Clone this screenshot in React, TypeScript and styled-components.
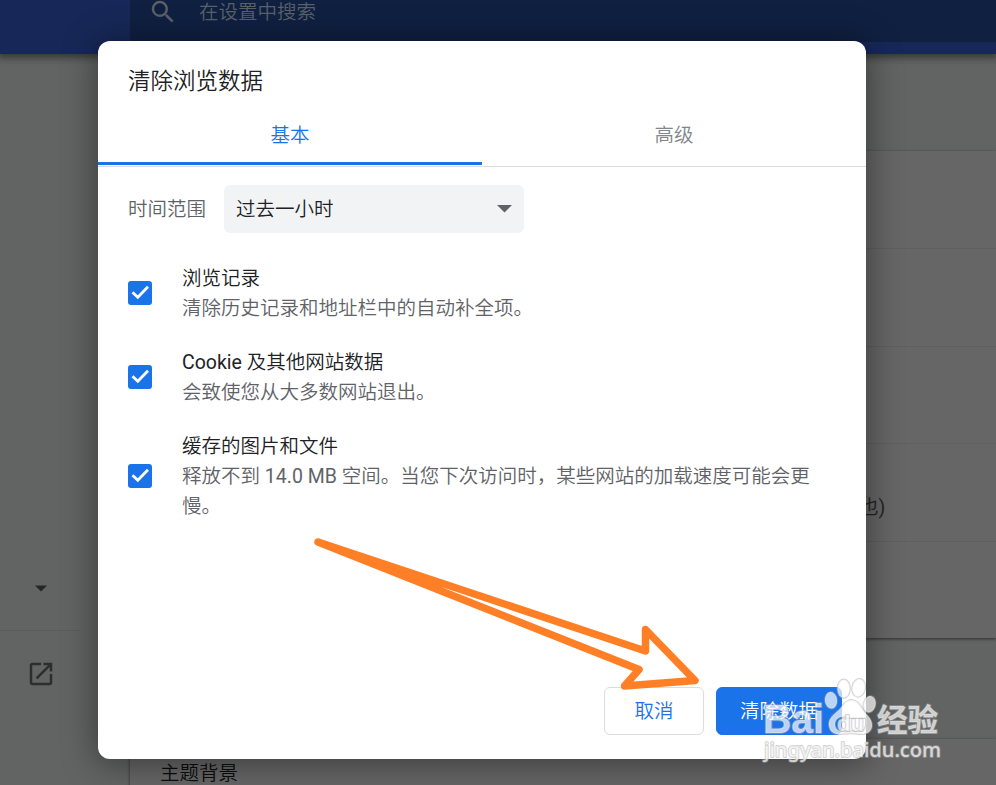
import React from 'react';
import styled, { createGlobalStyle } from 'styled-components';

const GlobalStyle = createGlobalStyle`
  * { box-sizing: border-box; }
  html, body { margin: 0; overflow: hidden; }
  body {
    font-family: Roboto, "Noto Sans CJK SC", sans-serif;
    font-size: 19.5px;
    line-height: 30px;
    color: #202124;
  }
`;

const Page = styled.div`
  position: relative;
  width: 996px;
  height: 785px;
  overflow: hidden;
  background: #626463;
`;

const Header = styled.header`
  position: relative;
  display: flex;
  height: 54px;
  padding-left: 130px;
  background: #172858;
  box-shadow: 0 2px 7px 2px rgba(20, 20, 20, 0.55);
`;

const SearchField = styled.div`
  display: flex;
  flex: 1;
  height: 42px;
  padding: 0 0 18px 18px;
  align-items: center;
  gap: 21px;
  background: #102041;
  color: #5a6069;
  font-weight: 350;
`;

const SearchHint = styled.span`
  padding-top: 2px;
`;

const Columns = styled.div`
  display: flex;
  height: 731px;
`;

const Sidebar = styled.aside`
  width: 130px;
  padding-top: 519px;
`;

const SidebarSection = styled.div<{ $last?: boolean }>`
  display: flex;
  width: 80px;
  height: ${(p) => (p.$last ? 86 : 58)}px;
  padding-left: 26px;
  align-items: ${(p) => (p.$last ? 'center' : 'flex-start')};
  border-bottom: ${(p) => (p.$last ? 'none' : '1px solid #5a5c5b')};
`;

const Content = styled.main`
  flex: 1;
  padding-top: 97px;
`;

const Card = styled.section`
  margin-bottom: 101px;
  background: #666;
  box-shadow: 0 1px 3px rgba(0, 0, 0, 0.55);
`;

const CardRow = styled.div`
  display: flex;
  height: 97.4px;
  padding-left: 30px;
  align-items: center;
  color: #242526;
  & + & { border-top: 1px solid #5f5f5f; }
`;

const NoteRow = styled(CardRow)`
  padding: 31px 0 0 729px;
  border-top: 1px solid #5f5f5f;
`;

const ThemeRow = styled(CardRow)`
  height: 70px;
  color: #0c0d0d;
  font-weight: 350;
`;

const Overlay = styled.div`
  position: absolute;
  inset: 0;
  display: flex;
  padding: 41px 0 0 98px;
  align-items: flex-start;
`;

const Dialog = styled.div`
  display: flex;
  flex-direction: column;
  width: 768px;
  height: 718px;
  background: #fff;
  border-radius: 12px;
  box-shadow: 0 3px 34px 2px rgba(0, 0, 0, 0.42);
  font-weight: 350;
`;

const Title = styled.h1`
  margin: 0;
  padding: 22px 30px 0;
  height: 62px;
  font-size: 22.5px;
  font-weight: 350;
  line-height: 36px;
`;

const Tabs = styled.div`
  display: flex;
  height: 64px;
  border-bottom: 1px solid #dadce0;
`;

const Tab = styled.div<{ $active?: boolean }>`
  flex: 1;
  height: 62px;
  padding-top: 18px;
  text-align: center;
  color: ${(p) => (p.$active ? '#1a73e8' : '#80868b')};
  border-bottom: 3px solid ${(p) => (p.$active ? '#1a73e8' : 'transparent')};
`;

const RangeRow = styled.div`
  display: flex;
  padding: 18px 30px 0;
  align-items: center;
  gap: 18px;
  color: #5f6368;
`;

const RangeText = styled.span`
  padding-top: 2px;
`;

const Select = styled.div`
  display: flex;
  width: 300px;
  height: 48px;
  padding: 0 12px;
  align-items: center;
  justify-content: space-between;
  border-radius: 6px;
  background: #f1f3f4;
  color: #202124;
`;

const Options = styled.div`
  display: flex;
  flex: 1;
  flex-direction: column;
  gap: 24px;
  padding: 30px 30px 0;
`;

const Option = styled.label`
  display: flex;
  align-items: center;
  gap: 30px;
`;

const Box = styled.span`
  display: flex;
  flex: none;
  width: 24px;
  height: 24px;
  border-radius: 3px;
  background: #1a73e8;
`;

const OptionText = styled.div`
  width: 640px;
  padding-top: 1px;
  margin-bottom: -1px;
`;

const Label = styled.div`
  color: #202124;
`;

const Description = styled.div`
  color: #5f6368;
`;

const Latin = styled.span`
  font-weight: 400;
`;

const Actions = styled.div`
  display: flex;
  justify-content: flex-end;
  gap: 12px;
  padding: 0 24px 24px;
`;

const Button = styled.button<{ $primary?: boolean }>`
  width: ${(p) => (p.$primary ? 126 : 100)}px;
  height: 48px;
  padding: 2px 0 0;
  border: 1px solid ${(p) => (p.$primary ? '#1a73e8' : '#dadce0')};
  border-radius: 6px;
  background: ${(p) => (p.$primary ? '#1a73e8' : '#fff')};
  color: ${(p) => (p.$primary ? '#fff' : '#1a73e8')};
  font: inherit;
`;

const Arrow = styled.svg`
  position: absolute;
  left: 300px;
  top: 520px;
`;

const Watermark = styled.svg`
  position: absolute;
  left: 755px;
  top: 670px;
`;

const Caret = ({ color, width }: { color: string; width: number }) => (
  <svg width={width} height={width / 2} viewBox="0 0 14 7">
    <path d="M0 0H14L7 7Z" fill={color} />
  </svg>
);

const CheckBox = () => (
  <Box>
    <svg width="24" height="24" viewBox="0 0 24 24" fill="none" stroke="#fff" strokeWidth="2.8">
      <path d="M4.5 11.3 9.8 16.3 20 5.7" />
    </svg>
  </Box>
);

const options = [
  { key: 'history', label: '浏览记录', description: '清除历史记录和地址栏中的自动补全项。' },
  {
    key: 'cookies',
    label: <><Latin>Cookie </Latin>及其他网站数据</>,
    description: '会致使您从大多数网站退出。',
  },
  {
    key: 'cache',
    label: '缓存的图片和文件',
    description: (
      <>释放不到<Latin> 14.0 MB </Latin>空间。当您下次访问时，某些网站的加载速度可能会更慢。</>
    ),
  },
];

export default function App() {
  return (
    <Page>
      <GlobalStyle />
      <Header>
        <SearchField>
          <svg width="30" height="30" viewBox="0 0 24 24" fill="#5a6069">
            <path d="M15.5 14h-.79l-.28-.27A6.47 6.47 0 0 0 16 9.5 6.5 6.5 0 1 0 9.5 16c1.61 0 3.09-.59 4.23-1.57l.27.28v.79l5 4.99L20.49 19l-4.99-5zm-6 0C7.01 14 5 11.99 5 9.5S7.01 5 9.5 5 14 7.01 14 9.5 11.99 14 9.5 14z" />
          </svg>
          <SearchHint>在设置中搜索</SearchHint>
        </SearchField>
      </Header>
      <Columns>
        <Sidebar>
          <SidebarSection>
            <svg width="30" height="30" viewBox="0 0 30 30">
              <path d="M9 12.500h12l-6 6z" fill="#242627" />
            </svg>
          </SidebarSection>
          <SidebarSection $last>
            <svg width="30" height="30" viewBox="0 0 24 24" fill="#2b2d2e">
              <path d="M19 19H5V5h7V3H5c-1.11 0-2 .9-2 2v14c0 1.1.89 2 2 2h14c1.1 0 2-.9 2-2v-7h-2v7zM14 3v2h3.59l-9.83 9.83 1.41 1.41L19 6.41V10h2V3h-7z" />
            </svg>
          </SidebarSection>
        </Sidebar>
        <Content>
          <Card>
            <CardRow />
            <CardRow />
            <CardRow />
            <NoteRow>也)</NoteRow>
            <CardRow />
          </Card>
          <Card>
            <ThemeRow>主题背景</ThemeRow>
          </Card>
        </Content>
      </Columns>
      <Overlay>
        <Dialog>
          <Title>清除浏览数据</Title>
          <Tabs>
            <Tab $active>基本</Tab>
            <Tab>高级</Tab>
          </Tabs>
          <RangeRow>
            <RangeText>时间范围</RangeText>
            <Select>
              <RangeText>过去一小时</RangeText>
              <Caret color="#5f6368" width={15} />
            </Select>
          </RangeRow>
          <Options>
            {options.map((o) => (
              <Option key={o.key}>
                <CheckBox />
                <OptionText>
                  <Label>{o.label}</Label>
                  <Description>{o.description}</Description>
                </OptionText>
              </Option>
            ))}
          </Options>
          <Actions>
            <Button>取消</Button>
            <Button $primary>清除数据</Button>
          </Actions>
        </Dialog>
      </Overlay>
      <Arrow width="420" height="180" viewBox="0 0 420 180" fill="none">
        <path
          d="M18 22 345.5 131V109.500L395 160.500 324.500 166 339 149.500Z"
          stroke="#ff7f27"
          strokeWidth="7.500"
          strokeLinejoin="round"
        />
      </Arrow>
      <Watermark width="200" height="110" viewBox="0 0 200 110">
        <g fill="#fff" fillOpacity="0.7" stroke="#a8a8a8" strokeOpacity="0.5" strokeWidth="1.800" strokeLinejoin="round" paintOrder="stroke">
          <text x="8" y="63" fontFamily="Liberation Sans" fontSize="40" fontWeight="700" textLength="61" lengthAdjust="spacingAndGlyphs">Bai</text>
          <ellipse cx="76" cy="30.300" rx="6" ry="8.300" transform="rotate(-6 76 30.300)" />
          <ellipse cx="88.700" cy="18.700" rx="6.300" ry="9.300" />
          <ellipse cx="103.700" cy="17.800" rx="6.500" ry="9" transform="rotate(10 103.700 17.800)" />
          <ellipse cx="114.500" cy="34.300" rx="6" ry="8.300" transform="rotate(14 114.500 34.300)" />
          <path
            fillRule="evenodd"
            d="M96 30C90 30 88 36 84 40C78 45 73 49 74 56C75 62 80 65 86 64C92 63 98 63 104 64C111 65 117 62 117 55C117 48 111 45 108 40C105 34 102 30 96 30ZM90 46.500C83 46.500 80 50 80 54C80 59 83 61.500 89 61.500H105C110 61.500 111 57 111 53V48H91Z"
          />
          <text x="82" y="61" fontFamily="Liberation Sans" fontSize="22" fontWeight="700" textLength="27" lengthAdjust="spacingAndGlyphs">du</text>
          <text x="122" y="61" fontFamily="Noto Sans CJK SC" fontSize="31" fontWeight="700" textLength="61" lengthAdjust="spacingAndGlyphs">经验</text>
          <text x="9" y="87" fontFamily="Noto Sans" fontSize="20" fontWeight="500" textLength="177" lengthAdjust="spacingAndGlyphs">jingyan.baidu.com</text>
        </g>
      </Watermark>
    </Page>
  );
}
